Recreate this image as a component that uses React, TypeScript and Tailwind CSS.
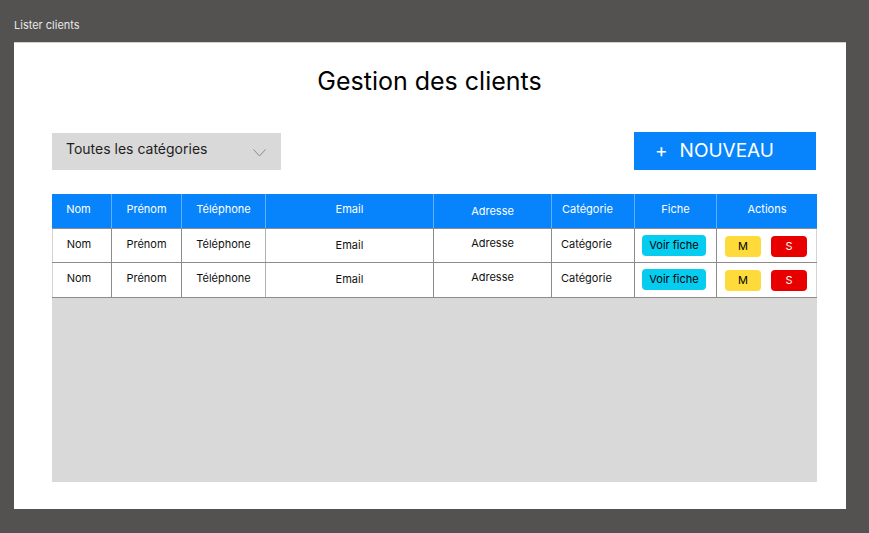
import React from "react";

const cols = "grid-cols-[59px_70px_84px_168px_118px_83px_82px_101px]";

const rows = [0, 1];

export default function App() {
  return (
    <div className="h-[533px] w-[869px] bg-[#535250] px-[14px] pt-[17px] font-['Inter',sans-serif] overflow-hidden">
      <div className="text-[11px] leading-[16px] text-[#e8e8e8]">Lister clients</div>
      <div className="mt-[9px] w-[832px] h-[467px] bg-white border-t border-[#cfcfcf] pl-[38px] pr-[29px] pt-[22px]">
        <h1 className="text-center text-[25px] leading-[32px] text-black pr-[10px]">Gestion des clients</h1>

        <div className="mt-[35px] flex items-center justify-between">
          <div className="w-[229px] h-[37px] bg-[#d9d9d9] flex items-center justify-between pl-[14px] pr-[15px]">
            <span className="text-[14px] text-[#1e1e1e] -mt-[6px]">Toutes les catégories</span>
            <svg width="13" height="8" viewBox="0 0 13 8" className="mt-[3px]">
              <path d="M0.5 0.5 L6.5 7 L12.5 0.5" fill="none" stroke="#8a8a8a" strokeWidth="1" />
            </svg>
          </div>
          <button className="w-[182px] h-[38px] bg-[#0784fc] text-white text-[19px] flex items-center pl-[21px] mr-[1px]">
            <span className="mr-[12px]">+</span>
            <span>NOUVEAU</span>
          </button>
        </div>

        <div className="mt-[24px] w-[765px]">
          <div className={`grid ${cols} h-[34px] bg-[#0784fc] text-white text-[11px]`}>
            {["Nom", "Prénom", "Téléphone", "Email", "Adresse", "Catégorie", "Fiche", "Actions"].map((h, i) => (
              <div
                key={h}
                className={`flex pt-[7px] ${i === 5 ? "pl-[10px]" : "justify-center"} ${i > 0 ? "border-l border-[#5fb0ff]" : "pr-[6px]"} ${i === 4 ? "pt-[9px]" : ""}`}
              >
                {h}
              </div>
            ))}
          </div>
          {rows.map((r) => (
            <div key={r} className={`grid ${cols} h-[35px] text-[11px] text-[#111] border-b border-[#8c8c8c] ${r === 0 ? "border-t border-t-[#8c8c8c]" : ""}`}>
              <div className="flex justify-center pt-[7px] pr-[6px] border-l border-[#d4d4d4]">Nom</div>
              <div className="flex justify-center pt-[7px] border-l border-[#8c8c8c]">Prénom</div>
              <div className="flex justify-center pt-[7px] border-l border-[#8c8c8c]">Téléphone</div>
              <div className="flex justify-center pt-[8px] border-l border-[#b0b0b0]">Email</div>
              <div className="flex justify-center pt-[6px] border-l border-[#8c8c8c]">Adresse</div>
              <div className="flex pl-[9px] pt-[7px] border-l border-[#8c8c8c]">Catégorie</div>
              <div className="flex justify-center pt-[6px] pr-[3px] border-l border-[#8c8c8c]">
                <span className="h-[21px] w-[64px] rounded-[4px] bg-[#06cdf0] flex items-center justify-center text-[11px] text-black">
                  Voir fiche
                </span>
              </div>
              <div className="flex pl-[8px] gap-[10px] pt-[7px] border-l border-[#8c8c8c] border-r border-r-[#d4d4d4]">
                <span className="h-[21px] w-[36px] rounded-[4px] bg-[#fedb3b] flex items-center justify-center text-[11px] text-black">M</span>
                <span className="h-[21px] w-[36px] rounded-[4px] bg-[#e80000] flex items-center justify-center text-[11px] text-white">S</span>
              </div>
            </div>
          ))}
          <div className="h-[184px] bg-[#d9d9d9]" />
        </div>
      </div>
    </div>
  );
}
